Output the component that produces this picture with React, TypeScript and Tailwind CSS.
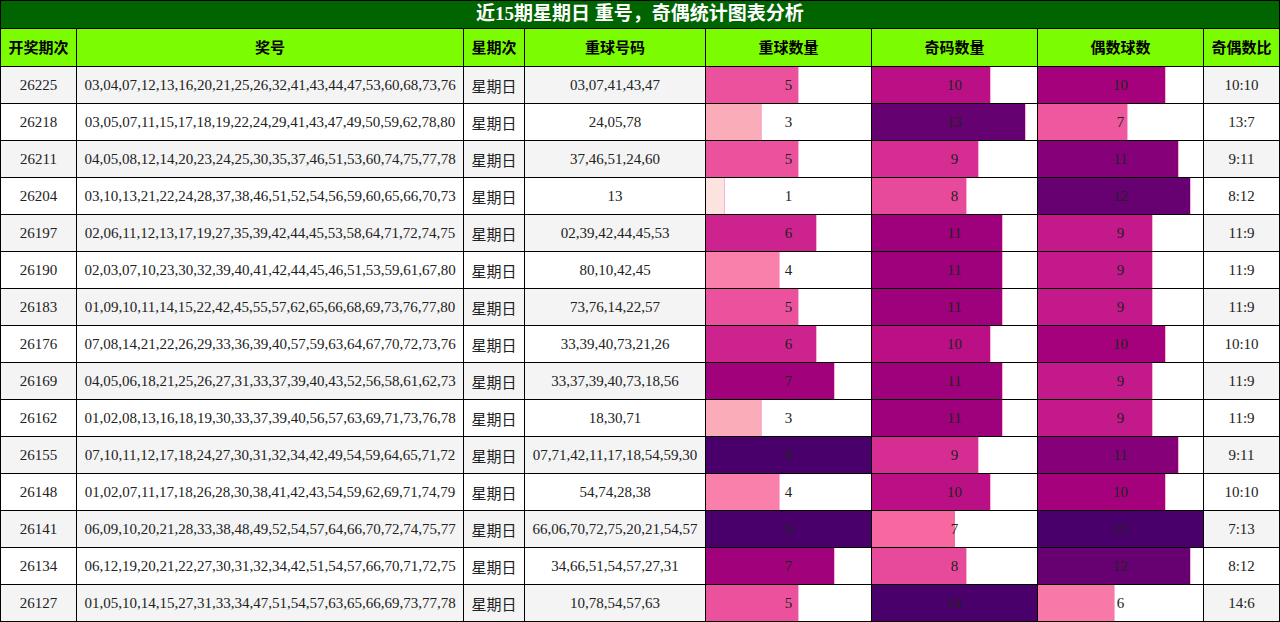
import React from "react";

const rows: [string, string, string, number, number, number, string][] = [
  ["26225", "03,04,07,12,13,16,20,21,25,26,32,41,43,44,47,53,60,68,73,76", "03,07,41,43,47", 5, 10, 10, "10:10"],
  ["26218", "03,05,07,11,15,17,18,19,22,24,29,41,43,47,49,50,59,62,78,80", "24,05,78", 3, 13, 7, "13:7"],
  ["26211", "04,05,08,12,14,20,23,24,25,30,35,37,46,51,53,60,74,75,77,78", "37,46,51,24,60", 5, 9, 11, "9:11"],
  ["26204", "03,10,13,21,22,24,28,37,38,46,51,52,54,56,59,60,65,66,70,73", "13", 1, 8, 12, "8:12"],
  ["26197", "02,06,11,12,13,17,19,27,35,39,42,44,45,53,58,64,71,72,74,75", "02,39,42,44,45,53", 6, 11, 9, "11:9"],
  ["26190", "02,03,07,10,23,30,32,39,40,41,42,44,45,46,51,53,59,61,67,80", "80,10,42,45", 4, 11, 9, "11:9"],
  ["26183", "01,09,10,11,14,15,22,42,45,55,57,62,65,66,68,69,73,76,77,80", "73,76,14,22,57", 5, 11, 9, "11:9"],
  ["26176", "07,08,14,21,22,26,29,33,36,39,40,57,59,63,64,67,70,72,73,76", "33,39,40,73,21,26", 6, 10, 10, "10:10"],
  ["26169", "04,05,06,18,21,25,26,27,31,33,37,39,40,43,52,56,58,61,62,73", "33,37,39,40,73,18,56", 7, 11, 9, "11:9"],
  ["26162", "01,02,08,13,16,18,19,30,33,37,39,40,56,57,63,69,71,73,76,78", "18,30,71", 3, 11, 9, "11:9"],
  ["26155", "07,10,11,12,17,18,24,27,30,31,32,34,42,49,54,59,64,65,71,72", "07,71,42,11,17,18,54,59,30", 9, 9, 11, "9:11"],
  ["26148", "01,02,07,11,17,18,26,28,30,38,41,42,43,54,59,62,69,71,74,79", "54,74,28,38", 4, 10, 10, "10:10"],
  ["26141", "06,09,10,20,21,28,33,38,48,49,52,54,57,64,66,70,72,74,75,77", "66,06,70,72,75,20,21,54,57", 9, 7, 13, "7:13"],
  ["26134", "06,12,19,20,21,22,27,30,31,32,34,42,51,54,57,66,70,71,72,75", "34,66,51,54,57,27,31", 7, 8, 12, "8:12"],
  ["26127", "01,05,10,14,15,27,31,33,34,47,51,54,57,63,65,66,69,73,77,78", "10,78,54,57,63", 5, 14, 6, "14:6"],
];

const stops = ["#fff7f3", "#fde0dd", "#fcc5c0", "#fa9fb5", "#f768a1", "#dd3497", "#ae017e", "#7a0177", "#49006a"];

function hex(c: string) {
  return [parseInt(c.slice(1, 3), 16), parseInt(c.slice(3, 5), 16), parseInt(c.slice(5, 7), 16)];
}

function rdpu(t: number) {
  const x = Math.max(0, Math.min(1, t)) * 8;
  const i = Math.min(7, Math.floor(x));
  const f = x - i;
  const a = hex(stops[i]);
  const b = hex(stops[i + 1]);
  const m = a.map((v, k) => Math.round(v + (b[k] - v) * f));
  return `rgb(${m[0]},${m[1]},${m[2]})`;
}

function barStyle(v: number, max: number): React.CSSProperties {
  const p = (v / max) * 100;
  const c = rdpu(v / max);
  if (p >= 100) return { background: c };
  return {
    background: `linear-gradient(to right, ${c} 0, ${c} ${p}%, rgba(247,170,210,0.9) ${p}%, rgba(247,170,210,0.9) calc(${p}% + 1px), transparent calc(${p}% + 1px))`,
  };
}

const headers = ["开奖期次", "奖号", "星期次", "重球号码", "重球数量", "奇码数量", "偶数球数", "奇偶数比"];

function Cell({ bg, children, style, cjk }: { bg: string; children: React.ReactNode; style?: React.CSSProperties; cjk?: boolean }) {
  return (
    <div
      className={`h-[37px] border-r border-b border-black flex items-center justify-center ${bg} ${
        cjk ? "font-['Noto_Sans_CJK_SC',sans-serif] pt-[2px]" : ""
      }`}
      style={style}
    >
      {children}
    </div>
  );
}

export default function App() {
  return (
    <div className="w-[1280px] grid grid-cols-[76px_387px_61px_181px_166px_166px_166px_76px] border-l border-t border-black text-[15px] text-[#222] font-['Liberation_Serif','Noto_Sans_CJK_SC',serif]">
      <div className="col-span-8 h-[28px] bg-[#006400] border-r border-b border-black flex items-center justify-center text-white font-bold text-[19px]">
        近15期星期日 重号，奇偶统计图表分析
      </div>
      {headers.map((h) => (
        <div
          key={h}
          className="h-[38px] bg-[#7cfc00] border-r border-b border-black flex items-center justify-center font-bold text-black font-['Noto_Sans_CJK_SC',sans-serif]"
        >
          {h}
        </div>
      ))}
      {rows.map((r, idx) => {
        const bg = idx % 2 === 0 ? "bg-[#f4f4f4]" : "bg-white";
        return (
          <React.Fragment key={r[0]}>
            <Cell bg={bg}>{r[0]}</Cell>
            <Cell bg={bg}>{r[1]}</Cell>
            <Cell bg={bg} cjk>
              星期日
            </Cell>
            <Cell bg={bg}>{r[2]}</Cell>
            <Cell bg={bg} style={barStyle(r[3], 9)}>
              {r[3]}
            </Cell>
            <Cell bg={bg} style={barStyle(r[4], 14)}>
              {r[4]}
            </Cell>
            <Cell bg={bg} style={barStyle(r[5], 13)}>
              {r[5]}
            </Cell>
            <Cell bg={bg}>{r[6]}</Cell>
          </React.Fragment>
        );
      })}
    </div>
  );
}
